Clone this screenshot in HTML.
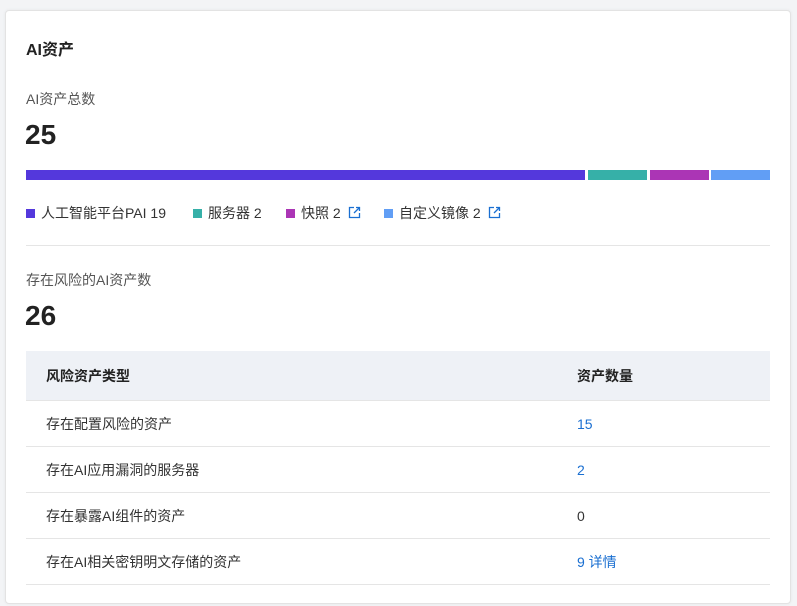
<!DOCTYPE html><html><head><meta charset="utf-8"><style>
body{margin:0;width:797px;height:606px;background:#f3f4f6;font-family:"Liberation Sans","Noto Sans CJK SC",sans-serif;color:#333;position:relative;overflow:hidden}
.card{position:absolute;left:5px;top:10px;width:784px;height:592px;background:#fff;border:1px solid #e3e3e3;border-radius:4px;box-shadow:0 0 3px rgba(0,0,0,.06)}
.a{position:absolute;white-space:nowrap}
.seg{position:absolute;top:170px;height:10px}
.sq{display:inline-block;width:9px;height:9px;margin-right:6px;vertical-align:0}
.lg{position:absolute;top:203px;font-size:14px;color:#333;white-space:nowrap}
.row{position:absolute;left:26px;width:744px;height:45px;border-bottom:1px solid #e5e5e5;font-size:14px;line-height:46px}
.row span{position:absolute;top:0}
.c1{left:20px}.c2{left:551px}
.blue{color:#1a6fd1}
</style></head><body>
<div class="card"></div>
<div class="a" style="left:26px;top:36px;font-size:16px;font-weight:bold;color:#222">AI资产</div>
<div class="a" style="left:26px;top:89px;font-size:14px;color:#555">AI资产总数</div>
<div class="a" style="left:25px;top:119px;font-size:28px;font-weight:bold;color:#222">25</div>
<div class="seg" style="left:26px;width:559px;background:#5438dc"></div>
<div class="seg" style="left:588px;width:59px;background:#36b0a8"></div>
<div class="seg" style="left:650px;width:59px;background:#ab35b5"></div>
<div class="seg" style="left:711px;width:59px;background:#619ef5"></div>
<div class="lg" style="left:26px"><span class="sq" style="background:#5438dc"></span>人工智能平台PAI 19</div>
<div class="lg" style="left:193px"><span class="sq" style="background:#36b0a8"></span>服务器 2</div>
<div class="lg" style="left:286px"><span class="sq" style="background:#ab35b5"></span>快照 2 <svg width="13" height="13" viewBox="0 0 13 13" style="vertical-align:-1px;margin-left:3px"><path d="M6 1.5H1.5v10h10V7M8 1.5h3.5V5M11.5 1.5L6 7" fill="none" stroke="#1a6fd1" stroke-width="1.3"/></svg></div>
<div class="lg" style="left:384px"><span class="sq" style="background:#619ef5"></span>自定义镜像 2 <svg width="13" height="13" viewBox="0 0 13 13" style="vertical-align:-1px;margin-left:3px"><path d="M6 1.5H1.5v10h10V7M8 1.5h3.5V5M11.5 1.5L6 7" fill="none" stroke="#1a6fd1" stroke-width="1.3"/></svg></div>
<div class="a" style="left:26px;top:245px;width:744px;height:1px;background:#e5e5e5"></div>
<div class="a" style="left:26px;top:270px;font-size:14px;color:#555">存在风险的AI资产数</div>
<div class="a" style="left:25px;top:300px;font-size:28px;font-weight:bold;color:#222">26</div>
<div class="row" style="top:351px;height:49px;line-height:50px;background:#eef1f6;font-weight:bold;color:#222"><span class="c1">风险资产类型</span><span class="c2">资产数量</span></div>
<div class="row" style="top:401px"><span class="c1">存在配置风险的资产</span><span class="c2 blue">15</span></div>
<div class="row" style="top:447px"><span class="c1">存在AI应用漏洞的服务器</span><span class="c2 blue">2</span></div>
<div class="row" style="top:493px"><span class="c1">存在暴露AI组件的资产</span><span class="c2">0</span></div>
<div class="row" style="top:539px"><span class="c1">存在AI相关密钥明文存储的资产</span><span class="c2 blue">9 详情</span></div>
</body></html>
